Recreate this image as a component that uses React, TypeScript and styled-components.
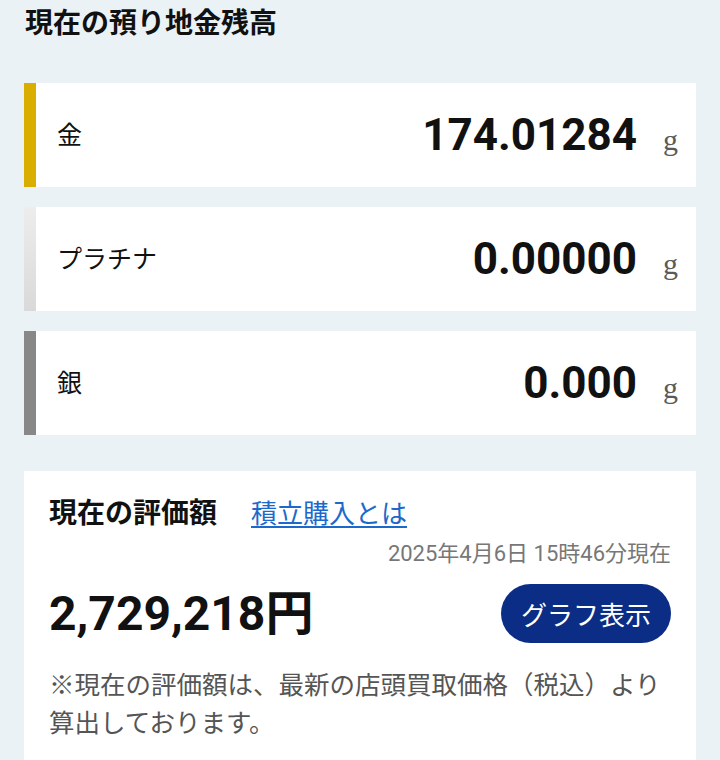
import React from "react";
import styled, { createGlobalStyle } from "styled-components";

const Global = createGlobalStyle`
  html, body {
    margin: 0;
    padding: 0;
    background: #ebf2f6;
  }
  body {
    font-family: Roboto, "Noto Sans CJK JP", sans-serif;
    color: #111;
  }
`;

const Page = styled.div`
  padding: 4px 24px 0;
  display: flex;
  flex-direction: column;
`;

const Title = styled.h1`
  margin: 0 0 39px 1px;
  font-size: 28px;
  line-height: 40px;
  font-weight: 700;
  color: #111;
`;

const BalanceList = styled.div`
  display: flex;
  flex-direction: column;
  gap: 20px;
`;

const BalanceRow = styled.div`
  display: flex;
  align-items: center;
  height: 104px;
  background: #fff;
`;

const Bar = styled.div<{ $fill: string }>`
  align-self: stretch;
  width: 12px;
  flex: none;
  background: ${(p) => p.$fill};
`;

const MetalName = styled.span`
  padding-left: 21px;
  font-size: 25px;
  line-height: 1;
  color: #111;
`;

const Amount = styled.div`
  margin-left: auto;
  padding-right: 18px;
  display: flex;
  align-items: baseline;
  gap: 26px;
`;

const Weight = styled.span`
  font-family: Roboto, sans-serif;
  font-weight: 700;
  font-size: 44px;
  line-height: 1;
  color: #111;
`;

const Unit = styled.span`
  font-family: "Liberation Serif", serif;
  font-size: 30px;
  line-height: 1;
  color: #5a5a5a;
`;

const ValueCard = styled.section`
  margin-top: 36px;
  background: #fff;
  padding: 23px 25px 30px;
  display: flex;
  flex-direction: column;
`;

const CardHead = styled.div`
  display: flex;
  align-items: baseline;
`;

const CardTitle = styled.h2`
  margin: 0;
  font-size: 28px;
  line-height: 40px;
  font-weight: 700;
  color: #111;
`;

const HelpLink = styled.a`
  margin-left: 34px;
  font-size: 26px;
  line-height: 40px;
  color: #1b6acb;
  text-decoration: underline;
  text-underline-offset: 3px;
  text-decoration-thickness: 2px;
`;

const Stamp = styled.div`
  margin-top: 5px;
  text-align: right;
  font-size: 22px;
  line-height: 30px;
  color: #777;
`;

const TotalRow = styled.div`
  margin-top: 15px;
  display: flex;
  align-items: center;
  justify-content: space-between;
`;

const Total = styled.div`
  font-family: Roboto, "Noto Sans CJK JP", sans-serif;
  font-weight: 700;
  font-size: 48px;
  line-height: 1;
  color: #111;
`;

const GraphButton = styled.button`
  height: 59px;
  width: 170px;
  border: none;
  border-radius: 30px;
  background: #0b2d85;
  color: #fff;
  font-family: "Noto Sans CJK JP", sans-serif;
  font-size: 26px;
  padding: 0;
  cursor: pointer;
`;

const Note = styled.p`
  margin: 23px 0 0;
  font-size: 25.5px;
  line-height: 38px;
  color: #555;
`;

const metals = [
  { name: "金", value: "174.01284", fill: "#d9ae00" },
  { name: "プラチナ", value: "0.00000", fill: "linear-gradient(#ededed, #d9d9d9)" },
  { name: "銀", value: "0.000", fill: "#888888" },
];

export default function App() {
  return (
    <>
      <Global />
      <Page>
        <Title>現在の預り地金残高</Title>
        <BalanceList>
          {metals.map((m) => (
            <BalanceRow key={m.name}>
              <Bar $fill={m.fill} />
              <MetalName>{m.name}</MetalName>
              <Amount>
                <Weight>{m.value}</Weight>
                <Unit>g</Unit>
              </Amount>
            </BalanceRow>
          ))}
        </BalanceList>
        <ValueCard>
          <CardHead>
            <CardTitle>現在の評価額</CardTitle>
            <HelpLink href="#">積立購入とは</HelpLink>
          </CardHead>
          <Stamp>2025年4月6日 15時46分現在</Stamp>
          <TotalRow>
            <Total>2,729,218円</Total>
            <GraphButton>グラフ表示</GraphButton>
          </TotalRow>
          <Note>※現在の評価額は、最新の店頭買取価格（税込）より算出しております。</Note>
        </ValueCard>
      </Page>
    </>
  );
}
